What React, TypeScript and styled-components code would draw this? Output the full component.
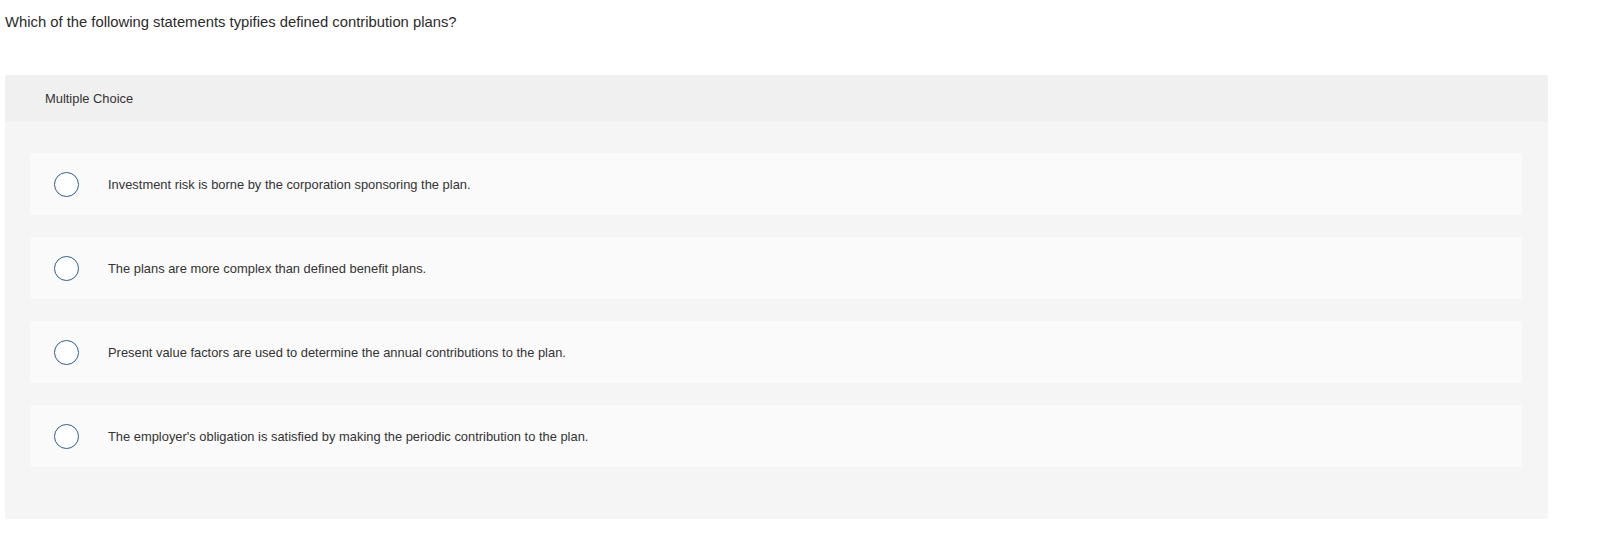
import React from "react";
import styled, { createGlobalStyle } from "styled-components";

const GlobalStyle = createGlobalStyle`
  body {
    margin: 0;
    background: #fff;
    font-family: "Liberation Sans", Arial, sans-serif;
    color: #333;
  }
`;

const Page = styled.div`
  padding: 14px 50px 0 5px;
`;

const Question = styled.p`
  margin: 0 0 44px;
  font-size: 14.8px;
  line-height: 17px;
  color: #2b2b2b;
`;

const Panel = styled.section`
  background: #f5f5f5;
  border-radius: 3px;
  overflow: hidden;
`;

const PanelHeader = styled.header`
  height: 47px;
  display: flex;
  align-items: center;
  padding-left: 40px;
  background: #f0f0f0;
  font-size: 12.9px;
  color: #333;
`;

const OptionList = styled.div`
  display: flex;
  flex-direction: column;
  gap: 22px;
  padding: 31px 26px 52px 25px;
`;

const Option = styled.label`
  height: 62px;
  display: flex;
  align-items: center;
  background: #fafafa;
  border-radius: 3px;
  padding-left: 24px;
  font-size: 12.9px;
  color: #333;
  cursor: pointer;
`;

const Radio = styled.span`
  width: 23px;
  height: 23px;
  border: 1.5px solid #2e5f8f;
  border-radius: 50%;
  background: #fff;
  flex-shrink: 0;
  margin-right: 29px;
`;

const options = [
  "Investment risk is borne by the corporation sponsoring the plan.",
  "The plans are more complex than defined benefit plans.",
  "Present value factors are used to determine the annual contributions to the plan.",
  "The employer's obligation is satisfied by making the periodic contribution to the plan.",
];

function App() {
  return (
    <>
      <GlobalStyle />
      <Page>
        <Question>
          Which of the following statements typifies defined contribution plans?
        </Question>
        <Panel>
          <PanelHeader>Multiple Choice</PanelHeader>
          <OptionList>
            {options.map((text) => (
              <Option key={text}>
                <Radio />
                {text}
              </Option>
            ))}
          </OptionList>
        </Panel>
      </Page>
    </>
  );
}

export default App;
